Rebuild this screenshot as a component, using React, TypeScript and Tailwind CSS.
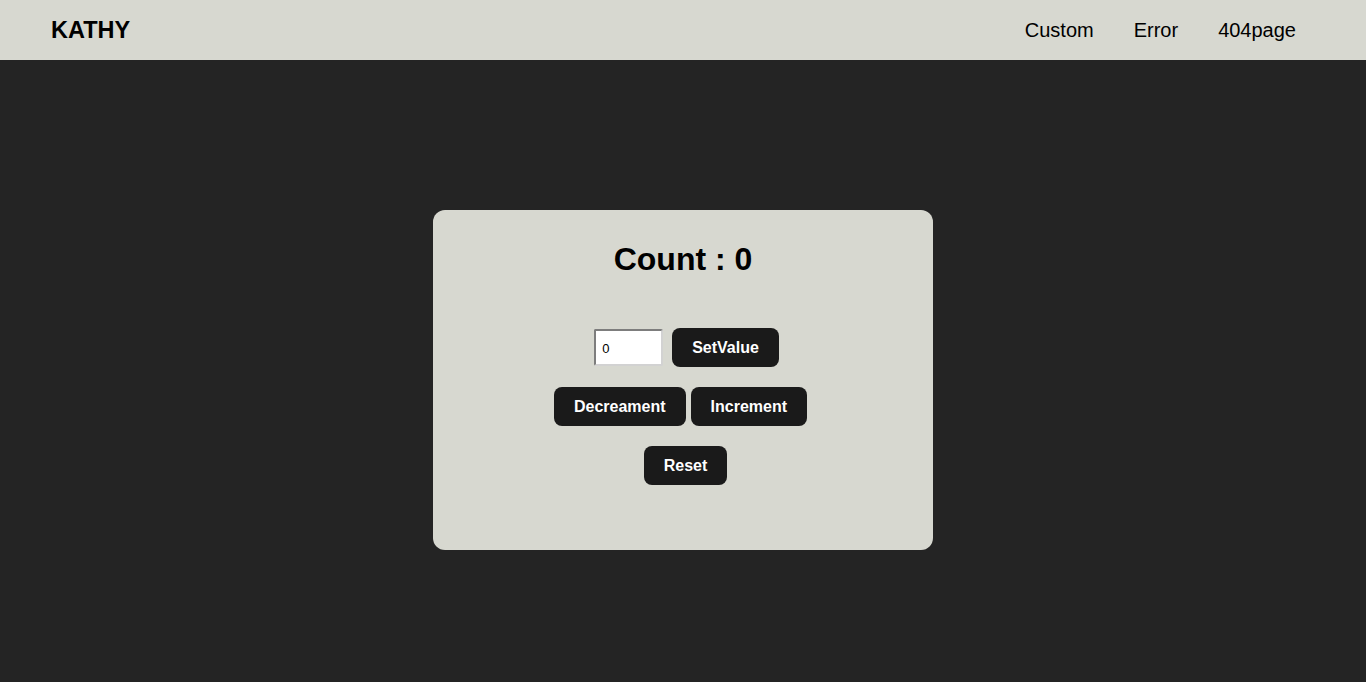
import { useState } from "react";

export default function App() {
  const [count, setCount] = useState(0);
  const [value, setValue] = useState("0");

  const btn =
    "bg-[#1a1a1a] text-white font-bold text-[16px] leading-[18px] px-[19px] py-[9.5px] rounded-[8px] border border-transparent";

  return (
    <div className="min-h-screen bg-[#242424] font-['Liberation_Sans',Arial,sans-serif] text-black">
      {/* Navbar */}
      <header className="h-[60px] bg-[#d7d8d0] flex items-center justify-between pl-[51px] pr-[70px]">
        <h1 className="text-[23.5px] font-bold leading-none mt-[2px]">KATHY</h1>
        <nav className="flex items-center gap-[40px] text-[20px] leading-none">
          <a href="#">Custom</a>
          <a href="#">Error</a>
          <a href="#">404page</a>
        </nav>
      </header>

      {/* Counter card */}
      <main className="flex justify-center pt-[150px]">
        <div className="w-[500px] h-[340px] bg-[#d7d8d0] rounded-[12px] flex flex-col items-center pt-[31px]">
          <h2 className="text-[32px] font-bold leading-[37px]">Count : {count}</h2>

          <div className="flex items-center gap-[9px] mt-[50px] ml-[7px]">
            <input
              type="text"
              value={value}
              onChange={e => setValue(e.target.value)}
              className="w-[69px] h-[37px] bg-white text-black text-[13px] pl-[6px] pt-[2px] rounded-[2px] border-2 border-t-[#7d7d7d] border-l-[#7d7d7d] border-b-[#d2d2d2] border-r-[#d2d2d2] outline-none"
            />
            <button className={btn} onClick={() => setCount(Number(value) || 0)}>SetValue</button>
          </div>

          <div className="flex items-center gap-[5px] mt-[20px] mr-[5px]">
            <button className={btn} onClick={() => setCount(c => c - 1)}>Decreament</button>
            <button className={btn} onClick={() => setCount(c => c + 1)}>Increment</button>
          </div>

          <div className="mt-[20px] ml-[5px]">
            <button className={btn} onClick={() => setCount(0)}>Reset</button>
          </div>
        </div>
      </main>
    </div>
  );
}
